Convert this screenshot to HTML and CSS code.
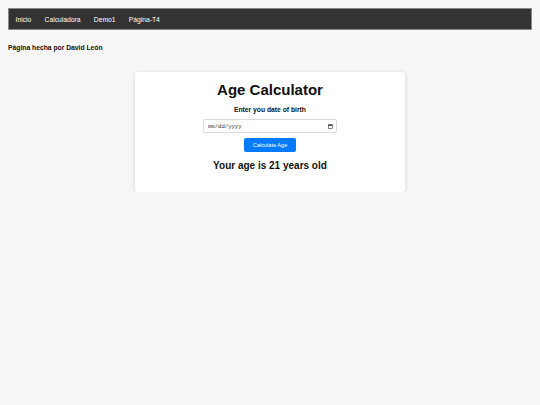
FILE: index.html
```html
<!DOCTYPE html>
<html lang="es">
<head>
    <meta charset="UTF-8">
    <meta name="viewport" content="width=device-width, initial-scale=1.0">
    <title>Age Calculator</title>
    <link rel="stylesheet" href="styles.css">
</head>
<body>
    <nav class="topnav">
        <a href="#">Inicio</a>
        <a href="#">Calculadora</a>
        <a href="#">Demo1</a>
        <a href="#">Página-T4</a>
    </nav>

    <p class="author">Página hecha por David León</p>

    <div class="card">
        <h1>Age Calculator</h1>
        <label for="birth">Enter you date of birth</label>
        <div class="date-field">
            <input type="text" id="birth" placeholder="mm/dd/yyyy">
            <svg class="cal-icon" width="5" height="5" viewBox="0 0 10 10">
                <rect x="1" y="1.5" width="8" height="7.5" fill="none" stroke="#333" stroke-width="1.2"/>
                <rect x="1" y="1.5" width="8" height="2.2" fill="#333"/>
            </svg>
        </div>
        <button type="button">Calculate Age</button>
        <h2 class="result">Your age is 21 years old</h2>
    </div>
</body>
</html>
```

FILE: styles.css
```css
body {
    margin: 8px;
    font-family: "Liberation Sans", Arial, sans-serif;
    background-color: #f6f6f6;
    color: #111;
}
.topnav {
    display: flex;
    align-items: center;
    height: 20px;
    padding: 0;
    background: #333;
    border: 1px solid #8a8a8a;
}
.topnav a {
    padding: 0 6.6px;
    color: white;
    font-size: 6.75px;
    text-decoration: none;
}
.author {
    margin: 14px 0 0;
    font-size: 6.75px;
    line-height: 8px;
    font-weight: bold;
}
.card {
    display: flex;
    flex-direction: column;
    align-items: center;
    width: 270px;
    margin: 20px auto 0;
    padding: 9px 0 20px;
    background: white;
    border-radius: 3px;
    box-shadow: 0 1px 4px rgba(0, 0, 0, 0.14);
}
h1 {
    margin: 0;
    font-size: 15px;
    line-height: 18px;
}
label {
    margin-top: 7px;
    font-size: 6.75px;
    line-height: 8px;
    font-weight: bold;
}
.date-field {
    position: relative;
    margin-top: 5px;
}
.date-field input {
    display: block;
    box-sizing: border-box;
    width: 134px;
    height: 14px;
    padding: 0 4px;
    border: 1px solid #dcdcdc;
    border-radius: 2px;
    font-family: "Liberation Mono", monospace;
    font-size: 5.6px;
    outline: none;
}
.date-field input::placeholder {
    color: #333;
}
.cal-icon {
    position: absolute;
    right: 4px;
    top: 4.5px;
}
button {
    width: 52px;
    height: 14.5px;
    margin-top: 4.5px;
    padding: 0;
    border: none;
    border-radius: 2px;
    background: #007bff;
    color: white;
    font-family: "Liberation Sans", Arial, sans-serif;
    font-size: 5.6px;
    cursor: pointer;
}
.result {
    margin: 7.5px 0 0;
    font-size: 10px;
    line-height: 12px;
}
```
